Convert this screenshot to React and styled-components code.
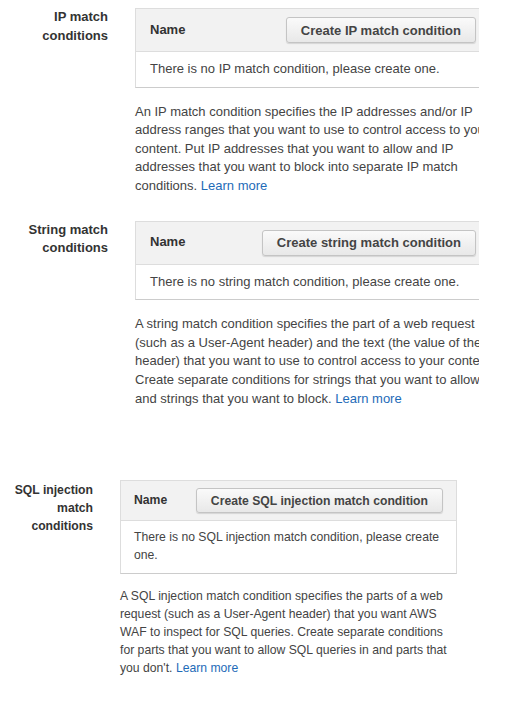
import styled, { createGlobalStyle } from 'styled-components';

const GlobalStyle = createGlobalStyle`
  body {
    margin: 8px;
    background: #ffffff;
    font-family: "Liberation Sans", Arial, sans-serif;
    color: #444444;
  }
`;

const Page = styled.div`
  width: 471px;
  overflow: hidden;
`;

const Section = styled.section`
  display: grid;
  grid-template-columns: ${(p) => p.$labelWidth}px ${(p) => p.$contentWidth}px;
  column-gap: 27px;
  margin-top: ${(p) => p.$top}px;
  font-size: ${(p) => p.$size}px;
  line-height: ${(p) => p.$lh}px;
`;

const Label = styled.div`
  padding-top: ${(p) => p.$offset}px;
  text-align: right;
  font-weight: bold;
  color: #333333;
`;

const Content = styled.div`
  min-width: 0;
`;

const Table = styled.div`
  border: 1px solid #dddddd;
  border-bottom-color: #cccccc;
  border-right-width: ${(p) => (p.$open ? 0 : 1)}px;
`;

const Header = styled.div`
  display: flex;
  align-items: center;
  justify-content: space-between;
  background: #f2f2f2;
  border-bottom: 1px solid #dddddd;
  padding: ${(p) => p.$pad}px ${(p) => p.$right}px ${(p) => p.$pad}px ${(p) => p.$left}px;
`;

const HeadCell = styled.span`
  font-weight: bold;
  color: #333333;
`;

const Button = styled.button`
  font-family: inherit;
  font-size: inherit;
  font-weight: bold;
  color: #444444;
  height: ${(p) => p.$h}px;
  padding: 0 14px;
  border: 1px solid #c4c4c4;
  border-radius: 3px;
  background: linear-gradient(#fafafa, #e8e8e8);
  box-shadow: 0 1px 1px rgba(0, 0, 0, 0.12);
  cursor: pointer;
`;

const EmptyRow = styled.div`
  padding: 8px ${(p) => p.$left}px;
  background: #ffffff;
`;

const Description = styled.p`
  margin: ${(p) => p.$gap}px 0 0;
  color: #444444;
`;

const Link = styled.a`
  color: #1e6bb8;
  text-decoration: none;
`;

const sections = [
  {
    label: 'IP match conditions',
    button: 'Create IP match condition',
    empty: 'There is no IP match condition, please create one.',
    text: 'An IP match condition specifies the IP addresses and/or IP address ranges that you want to use to control access to your content. Put IP addresses that you want to allow and IP addresses that you want to block into separate IP match conditions.',
    labelWidth: 100,
    contentWidth: 365,
    top: 0,
    size: 13,
    lh: 18.6,
    open: true,
    pad: 8,
    left: 14,
    right: 24,
    btnH: 26,
    gap: 15,
    labelOffset: 0,
  },
  {
    label: 'String match conditions',
    button: 'Create string match condition',
    empty: 'There is no string match condition, please create one.',
    text: 'A string match condition specifies the part of a web request (such as a User-Agent header) and the text (the value of the header) that you want to use to control access to your content. Create separate conditions for strings that you want to allow and strings that you want to block.',
    labelWidth: 100,
    contentWidth: 365,
    top: 25,
    size: 13,
    lh: 18.6,
    open: true,
    pad: 8,
    left: 14,
    right: 24,
    btnH: 26,
    gap: 15,
    labelOffset: 0,
  },
  {
    label: 'SQL injection match conditions',
    button: 'Create SQL injection match condition',
    empty: 'There is no SQL injection match condition, please create one.',
    text: "A SQL injection match condition specifies the parts of a web request (such as a User-Agent header) that you want AWS WAF to inspect for SQL queries. Create separate conditions for parts that you want to allow SQL queries in and parts that you don't.",
    labelWidth: 85,
    contentWidth: 337,
    top: 72,
    size: 12.2,
    lh: 17.9,
    open: false,
    pad: 7,
    left: 13,
    right: 13,
    btnH: 25,
    gap: 14,
    labelOffset: 2,
  },
];

const App = () => {
  return (
    <Page>
      <GlobalStyle />
      {sections.map((s) => (
        <Section
          key={s.label}
          $labelWidth={s.labelWidth}
          $contentWidth={s.contentWidth}
          $top={s.top}
          $size={s.size}
          $lh={s.lh}
        >
          <Label $offset={s.labelOffset}>{s.label}</Label>
          <Content>
            <Table $open={s.open}>
              <Header $pad={s.pad} $left={s.left} $right={s.right}>
                <HeadCell>Name</HeadCell>
                <Button $h={s.btnH}>{s.button}</Button>
              </Header>
              <EmptyRow $left={s.left}>{s.empty}</EmptyRow>
            </Table>
            <Description $gap={s.gap}>
              {s.text} <Link href="#">Learn more</Link>
            </Description>
          </Content>
        </Section>
      ))}
    </Page>
  );
};

export default App;
